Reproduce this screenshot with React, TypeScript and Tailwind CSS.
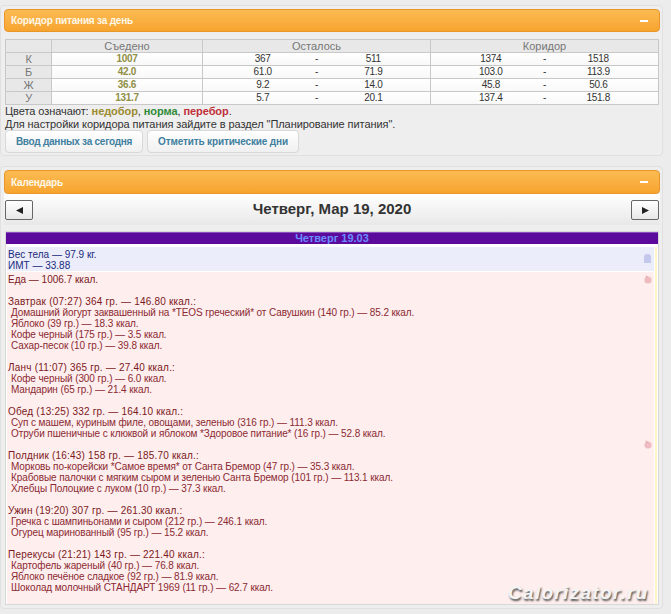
const rows = [
  ["К", "1007", "367", "511", "1374", "1518"],
  ["Б", "42.0", "61.0", "71.9", "103.0", "113.9"],
  ["Ж", "36.6", "9.2", "14.0", "45.8", "50.6"],
  ["У", "131.7", "5.7", "20.1", "137.4", "151.8"],
];
const meals: [string, string[]][] = [
  ["Завтрак (07:27) 364 гр. — 146.80 ккал.:", ["Домашний йогурт заквашенный на *TEOS греческий* от Савушкин (140 гр.) — 85.2 ккал.", "Яблоко (39 гр.) — 18.3 ккал.", "Кофе черный (175 гр.) — 3.5 ккал.", "Сахар-песок (10 гр.) — 39.8 ккал."]],
  ["Ланч (11:07) 365 гр. — 27.40 ккал.:", ["Кофе черный (300 гр.) — 6.0 ккал.", "Мандарин (65 гр.) — 21.4 ккал."]],
  ["Обед (13:25) 332 гр. — 164.10 ккал.:", ["Суп с машем, куриным филе, овощами, зеленью (316 гр.) — 111.3 ккал.", "Отруби пшеничные с клюквой и яблоком *Здоровое питание* (16 гр.) — 52.8 ккал."]],
  ["Полдник (16:43) 158 гр. — 185.70 ккал.:", ["Морковь по-корейски *Самое время* от Санта Бремор (47 гр.) — 35.3 ккал.", "Крабовые палочки с мягким сыром и зеленью Санта Бремор (101 гр.) — 113.1 ккал.", "Хлебцы Полоцкие с луком (10 гр.) — 37.3 ккал."]],
  ["Ужин (19:20) 307 гр. — 261.30 ккал.:", ["Гречка с шампиньонами и сыром (212 гр.) — 246.1 ккал.", "Огурец маринованный (95 гр.) — 15.2 ккал."]],
  ["Перекусы (21:21) 143 гр. — 221.40 ккал.:", ["Картофель жареный (40 гр.) — 76.8 ккал.", "Яблоко печёное сладкое (92 гр.) — 81.9 ккал.", "Шоколад молочный СТАНДАРТ 1969 (11 гр.) — 62.7 ккал."]],
];

function Header({ title, h }: { title: string; h: string }) {
  return (
    <div className={`flex items-center justify-between ${h} rounded-[4px] border border-[#e8952a] bg-gradient-to-b from-[#fbbb52] to-[#f7a42e] pl-[6px] pr-[11px]`}>
      <span className="text-[10px] font-bold tracking-[-0.2px] text-[#fff8e8]">{title}</span>
      <span className="h-[2px] w-[8px] bg-white"></span>
    </div>
  );
}

export default function App() {
  return (
    <div className="relative h-[614px] w-[671px] overflow-hidden bg-[#ececec] font-['Liberation_Sans',sans-serif] text-[10px]">
      {/* Panel 1 */}
      <div className="mt-[5px] h-[151px] w-[663px] rounded-[4px] border border-[#e0e0e0] bg-[#eeeeee] pl-[3px] pr-[2px] pt-[3px]">
        <Header title="Коридор питания за день" h="h-[23px]" />
        <table className="ml-[1px] mt-[7px] w-[654px] table-fixed border-collapse border border-[#c8c8c8] text-[10px] leading-[12px] text-[#333]">
          <colgroup>
            <col className="w-[46px]" />
            <col className="w-[151px]" />
            <col className="w-[110px]" />
            <col className="w-[8px]" />
            <col className="w-[110px]" />
            <col className="w-[110px]" />
            <col className="w-[8px]" />
            <col className="w-[110px]" />
          </colgroup>
          <thead>
            <tr className="h-[13px] bg-[#e8e8e8] text-[11px] text-[#777]">
              <th className="border border-[#c8c8c8] p-0 font-normal"></th>
              <th className="border border-[#c8c8c8] p-0 font-normal">Съедено</th>
              <th colSpan={3} className="border border-[#c8c8c8] p-0 font-normal">Осталось</th>
              <th colSpan={3} className="border border-[#c8c8c8] p-0 font-normal">Коридор</th>
            </tr>
          </thead>
          <tbody>
            {rows.map((r) => (
              <tr key={r[0]} className="h-[13px] bg-gradient-to-b from-white to-[#f8f8f8] tracking-[-0.3px]">
                <td className="border border-[#c8c8c8] bg-[#e8e8e8] p-0 text-center text-[11px] text-[#777]">{r[0]}</td>
                <td className="border border-[#c8c8c8] p-0 text-center font-bold text-[#8f8f45]">{r[1]}</td>
                <td className="border-y border-[#c8c8c8] p-0 pl-[10px] text-center">{r[2]}</td>
                <td className="border-y border-[#c8c8c8] p-0 text-center">-</td>
                <td className="border-y border-r border-[#c8c8c8] p-0 pr-[4px] text-center">{r[3]}</td>
                <td className="border-y border-[#c8c8c8] p-0 pl-[10px] text-center">{r[4]}</td>
                <td className="border-y border-[#c8c8c8] p-0 text-center">-</td>
                <td className="border-y border-[#c8c8c8] p-0 pr-[10px] text-center">{r[5]}</td>
              </tr>
            ))}
          </tbody>
        </table>
        <div className="ml-[1px] text-[11px] leading-[12.5px] tracking-[-0.07px] text-[#333]">
          <div>
            Цвета означают: <span className="font-bold text-[#9a8a30]">недобор</span>, <span className="font-bold text-[#2f8a3a]">норма</span>, <span className="font-bold text-[#c0303a]">перебор</span>.
          </div>
          <div>Для настройки коридора питания зайдите в раздел "Планирование питания".</div>
        </div>
        <div className="ml-[1px] flex gap-[4px]">
          <button className="flex h-[23px] w-[138px] items-center justify-center whitespace-nowrap rounded-[4px] border border-[#d8d8d8] bg-gradient-to-b from-white to-[#f0f0f0] text-[10px] font-bold tracking-[-0.25px] text-[#3f7f9f]">Ввод данных за сегодня</button>
          <button className="flex h-[23px] w-[152px] items-center justify-center whitespace-nowrap rounded-[4px] border border-[#d8d8d8] bg-gradient-to-b from-white to-[#f0f0f0] text-[10px] font-bold tracking-[-0.15px] text-[#3f7f9f]">Отметить критические дни</button>
        </div>
      </div>

      {/* Panel 2 */}
      <div className="mt-[10px] h-[443px] w-[663px] rounded-[4px] border border-[#e0e0e0] bg-[#eeeeee] pl-[3px] pr-[2px] pt-[3px]">
        <Header title="Календарь" h="h-[24px]" />
        <div className="flex h-[31px] items-start justify-between bg-gradient-to-b from-white to-[#e8e8e8] px-[1px] pt-[6px]">
          <button className="flex h-[20px] w-[28px] items-center justify-center rounded-[2px] border border-[#666] bg-gradient-to-b from-white to-[#e8e8e8]">
            <svg width="7" height="7" viewBox="0 0 7 7"><path d="M7 0V7L0 3.5Z" fill="#222" /></svg>
          </button>
          <span className="text-[15px] font-bold leading-[17px] text-[#333]">Четверг, Мар 19, 2020</span>
          <button className="flex h-[20px] w-[28px] items-center justify-center rounded-[2px] border border-[#666] bg-gradient-to-b from-white to-[#e8e8e8]">
            <svg width="7" height="7" viewBox="0 0 7 7"><path d="M0 0V7L7 3.5Z" fill="#222" /></svg>
          </button>
        </div>
        <div className="ml-[1px] mt-[6px] w-[654px] border border-[#d8d8d8] bg-white">
          <div className="h-[12px] border-t border-[#8a50c0] bg-[#5c0a9c] text-center text-[11px] font-bold leading-[11px] text-[#6a8cff]">Четверг 19.03</div>
          <div className="mx-[1px] mt-[3px] border-r-2 border-[#fff3c8] pr-[1px]">
            <div className="relative h-[24px] bg-[#ecedfb] pl-[1px] pt-[2px] text-[10px] leading-[11px] text-[#1a2a7a]">
              <div>Вес тела — 97.9 кг.</div>
              <div>ИМТ — 33.88</div>
              <svg className="absolute right-[3px] top-[7px]" width="7" height="9" viewBox="0 0 7 9"><path d="M2 0H5L7 2V9H0V2Z" fill="#c4c8ec" /></svg>
            </div>
            <div className="relative mt-[1px] h-[332px] bg-[#ffeeee] pl-[1px] pt-[2px] text-[10px] leading-[11px] text-[#8a2a32]">
              <div className="text-[#7a1a22]">Еда — 1006.7 ккал.</div>
              {meals.map(([head, items]) => (
                <div key={head} className="mt-[11px]">
                  <div className="tracking-[0.2px] text-[#7a1a22]">{head}</div>
                  {items.map((i) => (
                    <div key={i} className="pl-[3px] tracking-[-0.1px]">{i}</div>
                  ))}
                </div>
              ))}
              <svg className="absolute right-[2px] top-[3px]" width="8" height="9" viewBox="0 0 8 9"><circle cx="4" cy="5" r="3.6" fill="#eebcc0" /><path d="M1 0L4 2L3 3Z" fill="#d8a0a6" /></svg>
              <svg className="absolute right-[2px] top-[168px]" width="8" height="9" viewBox="0 0 8 9"><circle cx="4" cy="5" r="3.6" fill="#eebcc0" /><path d="M1 0L4 2L3 3Z" fill="#d8a0a6" /></svg>
            </div>
          </div>
        </div>
      </div>

      <div className="absolute left-[508px] top-[582px] text-[19px] font-bold italic leading-[22px] tracking-[1.3px] text-[#f4f4f4] [text-shadow:1px_2px_2px_#555]">Calorizator.ru</div>
    </div>
  );
}
